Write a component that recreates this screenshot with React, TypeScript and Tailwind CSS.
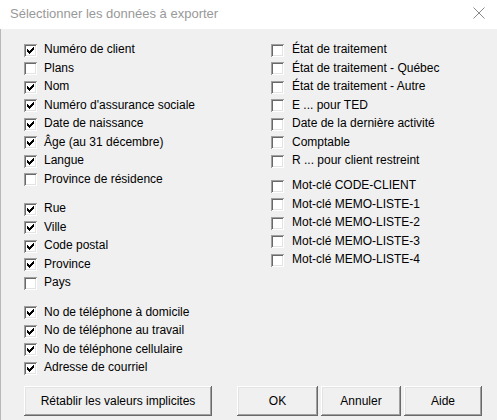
import React from "react";

type Item = { label: string; checked: boolean };

const leftGroups: Item[][] = [
  [
    { label: "Numéro de client", checked: true },
    { label: "Plans", checked: false },
    { label: "Nom", checked: true },
    { label: "Numéro d'assurance sociale", checked: true },
    { label: "Date de naissance", checked: true },
    { label: "Âge (au 31 décembre)", checked: true },
    { label: "Langue", checked: true },
    { label: "Province de résidence", checked: false },
  ],
  [
    { label: "Rue", checked: true },
    { label: "Ville", checked: true },
    { label: "Code postal", checked: true },
    { label: "Province", checked: true },
    { label: "Pays", checked: false },
  ],
  [
    { label: "No de téléphone à domicile", checked: true },
    { label: "No de téléphone au travail", checked: true },
    { label: "No de téléphone cellulaire", checked: true },
    { label: "Adresse de courriel", checked: true },
  ],
];

const rightGroups: Item[][] = [
  [
    { label: "État de traitement", checked: false },
    { label: "État de traitement - Québec", checked: false },
    { label: "État de traitement - Autre", checked: false },
    { label: "E ... pour TED", checked: false },
    { label: "Date de la dernière activité", checked: false },
    { label: "Comptable", checked: false },
    { label: "R ... pour client restreint", checked: false },
  ],
  [
    { label: "Mot-clé CODE-CLIENT", checked: false },
    { label: "Mot-clé MEMO-LISTE-1", checked: false },
    { label: "Mot-clé MEMO-LISTE-2", checked: false },
    { label: "Mot-clé MEMO-LISTE-3", checked: false },
    { label: "Mot-clé MEMO-LISTE-4", checked: false },
  ],
];

function Box({ checked }: { checked: boolean }) {
  return (
    <div className="relative w-[13px] h-[13px] shrink-0 bg-white shadow-[inset_1px_1px_0_#a0a0a0,inset_-1px_-1px_0_#ffffff,inset_2px_2px_0_#696969,inset_-2px_-2px_0_#e3e3e3]">
      {checked && (
        <svg
          className="absolute left-[3px] top-[3px]"
          width="7"
          height="7"
          viewBox="0 0 7 7"
          shapeRendering="crispEdges"
        >
          <path
            fill="#000"
            d="M6 0h1v3h-1zM5 1h1v3h-1zM4 2h1v3h-1zM0 2h1v3h-1zM1 3h1v3h-1zM3 3h1v3h-1zM2 4h1v3h-1z"
          />
        </svg>
      )}
    </div>
  );
}

function Row({ item, gap }: { item: Item; gap: string }) {
  return (
    <div className={`flex items-center h-[18.5px] ${gap}`}>
      <Box checked={item.checked} />
      <span className="whitespace-nowrap leading-none pb-[2px]">{item.label}</span>
    </div>
  );
}

function Btn({ label, w }: { label: string; w: string }) {
  return (
    <div
      className={`${w} h-[30px] flex items-center justify-center bg-[#f0f0f0] shadow-[inset_-1px_-1px_0_#696969,inset_1px_1px_0_#ffffff,inset_-2px_-2px_0_#a0a0a0,inset_2px_2px_0_#e3e3e3] whitespace-nowrap`}
    >
      {label}
    </div>
  );
}

export default function App() {
  return (
    <div
      className="w-[497px] h-[420px] overflow-hidden bg-[#f0f0f0] text-black text-[12px]"
      style={{ fontFamily: '"Liberation Sans", Arial, sans-serif' }}
    >
      <div className="h-[29px] bg-white flex items-center justify-between pl-[10px] pr-[12px]">
        <span className="text-[13px] text-[#999999] leading-none pb-[3px]">
          Sélectionner les données à exporter
        </span>
        <svg width="12" height="12" viewBox="0 0 12 12" className="mb-[3px]">
          <path d="M0.5 0.5L11.5 11.5M11.5 0.5L0.5 11.5" stroke="#8a8a8a" strokeWidth="1" />
        </svg>
      </div>
      <div className="h-[391px] border-l border-[#b8b8b8] flex flex-col">
        <div className="flex pt-[12px]">
          <div className="w-[270px] pl-[23px] flex flex-col gap-[11px]">
            {leftGroups.map((g, i) => (
              <div key={i} className="flex flex-col">
                {g.map((it) => (
                  <Row key={it.label} item={it} gap="gap-[7px]" />
                ))}
              </div>
            ))}
          </div>
          <div className="flex flex-col gap-[6.5px]">
            {rightGroups.map((g, i) => (
              <div key={i} className="flex flex-col">
                {g.map((it) => (
                  <Row key={it.label} item={it} gap="gap-[8px]" />
                ))}
              </div>
            ))}
          </div>
        </div>
        <div className="flex mt-[8.5px] pl-[23px]">
          <Btn label="Rétablir les valeurs implicites" w="w-[188px]" />
          <div className="ml-[25px] flex gap-[3px]">
            <Btn label="OK" w="w-[81px]" />
            <Btn label="Annuler" w="w-[80px]" />
            <Btn label="Aide" w="w-[78px]" />
          </div>
        </div>
      </div>
    </div>
  );
}
